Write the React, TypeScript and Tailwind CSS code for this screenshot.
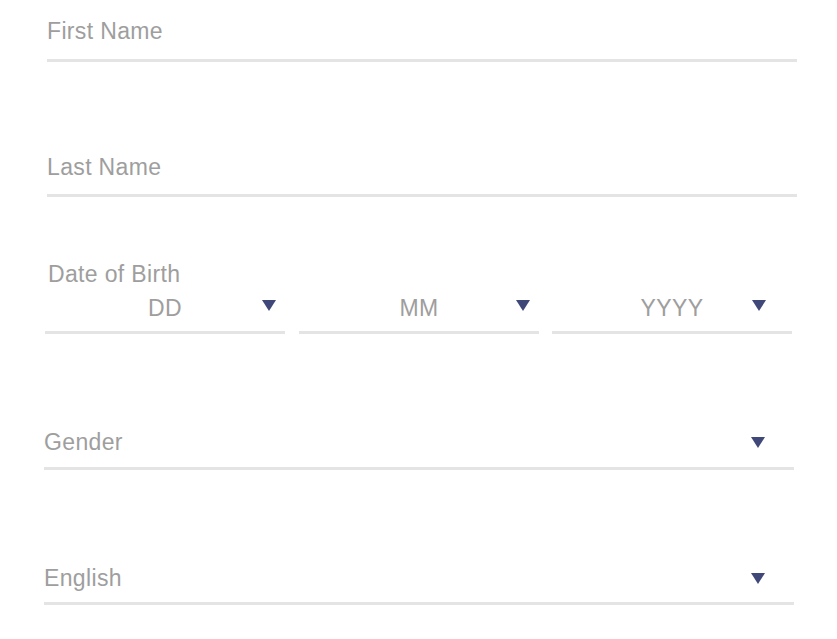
import React from "react";

const Arrow = () => (
  <svg width="14" height="11" viewBox="0 0 14 11" className="block">
    <polygon points="0,0 14,0 7,11" fill="#3f4878" />
  </svg>
);

const font = { fontFamily: '"Liberation Sans", Arial, sans-serif' };

export default function App() {
  return (
    <div className="w-[837px] h-[639px] bg-white text-[#9e9e9e] text-[23px] leading-[28px] tracking-[0.35px]" style={font}>
      <div className="flex flex-col">
        {/* First Name */}
        <div className="ml-[47px] w-[750px] pt-[17px] pb-[14px] border-b-[3px] border-[#e4e4e4]">
          First Name
        </div>
        {/* Last Name */}
        <div className="ml-[47px] w-[750px] mt-[76px] pt-[15px] pb-[13px] border-b-[3px] border-[#e4e4e4]">
          Last Name
        </div>
        {/* Date of Birth */}
        <div className="mt-[63px] ml-[48px] h-[28px]">Date of Birth</div>
        <div className="flex ml-[45px] mt-[6px]">
          <div className="relative w-[240px] h-[40px] border-b-[3px] border-[#e4e4e4] flex justify-center">
            <span className="leading-[28px]">DD</span>
            <div className="absolute right-[9px] top-[6px]"><Arrow /></div>
          </div>
          <div className="relative ml-[14px] w-[240px] h-[40px] border-b-[3px] border-[#e4e4e4] flex justify-center">
            <span className="leading-[28px]">MM</span>
            <div className="absolute right-[9px] top-[6px]"><Arrow /></div>
          </div>
          <div className="relative ml-[13px] w-[240px] h-[40px] border-b-[3px] border-[#e4e4e4] flex justify-center">
            <span className="leading-[28px]">YYYY</span>
            <div className="absolute right-[26px] top-[6px]"><Arrow /></div>
          </div>
        </div>
        {/* Gender */}
        <div className="ml-[44px] w-[750px] mt-[94px] pb-[11px] border-b-[3px] border-[#e4e4e4] flex items-center justify-between">
          <span>Gender</span>
          <div className="mr-[29px]"><Arrow /></div>
        </div>
        {/* Language */}
        <div className="ml-[44px] w-[750px] mt-[94px] pb-[10px] border-b-[3px] border-[#e4e4e4] flex items-center justify-between">
          <span>English</span>
          <div className="mr-[29px]"><Arrow /></div>
        </div>
      </div>
    </div>
  );
}
